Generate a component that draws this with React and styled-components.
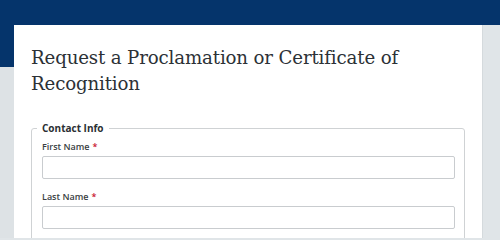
import React from "react";
import styled, { createGlobalStyle } from "styled-components";

const Global = createGlobalStyle`
  html, body { margin: 0; padding: 0; }
  body {
    background: #e0e5e8;
    font-family: "Open Sans", "Noto Sans", sans-serif;
    width: 500px;
    height: 238px;
    overflow: hidden;
  }
`;

const TopBand = styled.div`
  height: 25px;
  background: #05346b;
`;

const Main = styled.div`
  display: grid;
  grid-template-columns: 14px 468px 1fr;
  height: 213px;
`;

const LeftGutter = styled.div`
  background: linear-gradient(#05346b 0 42px, #dde2e5 42px);
`;

const RightGutter = styled.div`
  background: #e0e5e8;
  border-left: 1px solid #d5dadd;
`;

const Card = styled.main`
  background: #ffffff;
  padding: 20px 18px 0 17px;
  overflow: hidden;
`;

const Title = styled.h1`
  margin: 0 0 24px;
  font-family: "DejaVu Serif", "Liberation Serif", serif;
  font-weight: 400;
  font-size: 18.2px;
  line-height: 26px;
  color: #2c3136;
  letter-spacing: -0.15px;
`;

const Fieldset = styled.fieldset`
  margin: 0;
  border: 1px solid #cfd2d4;
  border-radius: 3px;
  padding: 0 9px 12px 10px;
  width: 434px;
  box-sizing: border-box;
`;

const Legend = styled.legend`
  margin-left: -5px;
  padding: 0 5px;
  font-size: 10px;
  font-weight: 700;
  line-height: 14px;
  color: #2b2f33;
`;

const Field = styled.div`
  display: flex;
  flex-direction: column;
  margin-top: ${(p) => (p.$first ? "6px" : "12px")};
`;

const Label = styled.label`
  font-size: 9px;
  font-weight: 600;
  line-height: 12px;
  color: #3a3f43;
  margin-bottom: 3px;
`;

const Req = styled.span`
  color: #c8102e;
  margin-left: 3px;
`;

const Input = styled.input`
  box-sizing: border-box;
  height: 23px;
  width: 100%;
  border: 1px solid #c9cccf;
  border-radius: 2px;
  background: #fff;
  margin: 0;
`;

export default function App() {
  return (
    <>
      <Global />
      <TopBand />
      <Main>
        <LeftGutter />
        <Card>
          <Title>Request a Proclamation or Certificate of Recognition</Title>
          <Fieldset>
            <Legend>Contact Info</Legend>
            <Field $first>
              <Label htmlFor="fn">
                First Name<Req>*</Req>
              </Label>
              <Input id="fn" type="text" />
            </Field>
            <Field>
              <Label htmlFor="ln">
                Last Name<Req>*</Req>
              </Label>
              <Input id="ln" type="text" />
            </Field>
          </Fieldset>
        </Card>
        <RightGutter />
      </Main>
    </>
  );
}
